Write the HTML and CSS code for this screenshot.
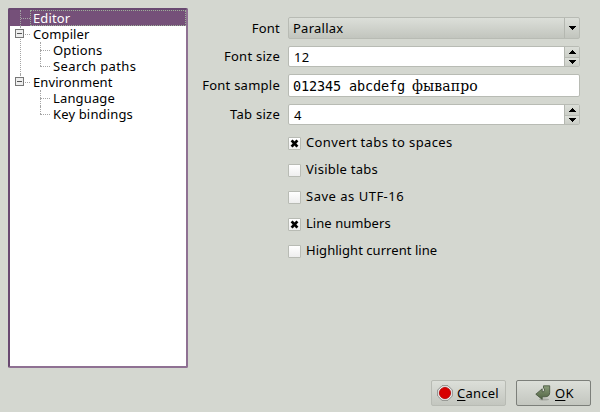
FILE: index.html
```html
<!DOCTYPE html>
<html lang="en">
<head>
<meta charset="utf-8">
<title>Settings</title>
<link rel="stylesheet" href="styles.css">
</head>
<body>
<main class="content">
  <ul class="tree">
    <li class="node leaf"><span class="item selected">Editor</span></li>
    <li class="node"><i class="toggle"></i><span class="item">Compiler</span>
      <ul class="children">
        <li>Options</li>
        <li class="wide">Search paths</li>
      </ul>
    </li>
    <li class="node last"><i class="toggle"></i><span class="item">Environment</span>
      <ul class="children">
        <li>Language</li>
        <li>Key bindings</li>
      </ul>
    </li>
  </ul>
  <section class="form">
    <div class="row"><label>Font</label><div class="combo"><span>Parallax</span><b><svg width="7" height="4" shape-rendering="crispEdges"><path d="M0 0h7v1H6v1H5v1H4v1H3V3H2V2H1V1H0z"/></svg></b></div></div>
    <div class="row size"><label>Font size</label><div class="field spin"><span>12</span><div class="arrows"><b><svg width="7" height="4" shape-rendering="crispEdges"><path d="M3 0h1v1h1v1h1v1h1v1H0V3h1V2h1V1h1z"/></svg></b><b><svg width="7" height="4" shape-rendering="crispEdges"><path d="M0 0h7v1H6v1H5v1H4v1H3V3H2V2H1V1H0z"/></svg></b></div></div></div>
    <div class="row sample"><label>Font sample</label><div class="field"><span class="mono">012345 abcdefg</span><span class="cyr">фывапро</span></div></div>
    <div class="row tabsize"><label>Tab size</label><div class="field spin"><span>4</span><div class="arrows"><b><svg width="7" height="4" shape-rendering="crispEdges"><path d="M3 0h1v1h1v1h1v1h1v1H0V3h1V2h1V1h1z"/></svg></b><b><svg width="7" height="4" shape-rendering="crispEdges"><path d="M0 0h7v1H6v1H5v1H4v1H3V3H2V2H1V1H0z"/></svg></b></div></div></div>
    <div class="checks">
      <div class="check wide"><i><svg width="13" height="13"><path d="M3.6 3.4l5.8 6.2M9.4 3.4L3.6 9.6"/></svg></i><span>Convert tabs to spaces</span></div>
      <div class="check"><i></i><span>Visible tabs</span></div>
      <div class="check wider"><i></i><span>Save as UTF-16</span></div>
      <div class="check tight"><i><svg width="13" height="13"><path d="M3.6 3.4l5.8 6.2M9.4 3.4L3.6 9.6"/></svg></i><span>Line numbers</span></div>
      <div class="check tight"><i></i><span>Highlight current line</span></div>
    </div>
  </section>
</main>
<footer class="actions">
  <div class="button cancel">
    <svg width="16" height="16" viewBox="0 0 16 16"><path d="M5 .7h6L15.3 5v6L11 15.3H5L.7 11V5z" fill="#eee" stroke="#8a8c88"/><circle cx="8" cy="8" r="5.6" fill="#d80000" stroke="#b00000" stroke-width=".8"/></svg>
    <span><u>C</u>ancel</span>
  </div>
  <div class="button ok">
    <svg width="16" height="16" viewBox="0 0 16 16"><defs><linearGradient id="g" x2="0" y2="1"><stop stop-color="#8b9d7b"/><stop offset="1" stop-color="#506342"/></linearGradient></defs><ellipse cx="9" cy="14.5" rx="5" ry="1" fill="#a7aaa3"/><path d="M8.5.8h6.2v6.7q0 4.3-4.7 4.3H7.2v2.6L.8 9.2l6.4-5.4v3h.9q1.4 0 1.4-1.5V3.8l-1-.6z" fill="url(#g)" stroke="#42503a" stroke-width=".8"/></svg>
    <span><u>O</u>K</span>
  </div>
</footer>
</body>
</html>
```

FILE: styles.css
```css
* { box-sizing: border-box; }
body {
  margin: 0;
  width: 600px;
  height: 412px;
  overflow: hidden;
  background: #d4d7d0;
  color: #000;
  font: 13px/16px "Noto Sans", sans-serif;
  letter-spacing: .25px;
  white-space: nowrap;
}
ul { list-style: none; margin: 0; padding: 0; }
i, b { display: block; }
svg { display: block; flex: none; }
.wide { letter-spacing: .38px; }
.wider { letter-spacing: .5px; }
.tight { letter-spacing: .05px; }

.content { display: flex; padding: 8px 20px 0 8px; height: 380px; }
.tree {
  width: 180px;
  height: 360px;
  background: #fff;
  border: 2px solid #8f7193;
  border-color: #684870 #8f7193 #8f7193 #684870;
  border-radius: 2px;
}
.node { position: relative; padding-left: 20px; }
.node::before {
  content: "";
  position: absolute;
  left: 10px;
  top: 0;
  bottom: 0;
  border-left: 1px dotted #a5a5a5;
}
.node.last::before { bottom: auto; height: 8px; }
.node::after {
  content: "";
  position: absolute;
  left: 11px;
  top: 8px;
  width: 9px;
  border-top: 1px dotted #a5a5a5;
}
.leaf { background: #755079; }
.item { display: block; height: 16px; padding-left: 3px; letter-spacing: .1px; }
.selected { color: #fff; outline: 1px dotted #9cb198; outline-offset: -1px; }
.toggle {
  position: absolute;
  z-index: 1;
  left: 5px;
  top: 3px;
  width: 9px;
  height: 9px;
  border: 1px solid #777;
  background: linear-gradient(#555, #555) center / 5px 1px no-repeat #eee;
}
.children { letter-spacing: .15px; }
.children li { position: relative; padding-left: 23px; height: 16px; }
.children li::before {
  content: "";
  position: absolute;
  left: 10px;
  top: 0;
  height: 16px;
  border-left: 1px dotted #a5a5a5;
}
.children li:last-child::before { height: 8px; }
.children li::after {
  content: "";
  position: absolute;
  left: 10px;
  top: 8px;
  width: 10px;
  border-top: 1px dotted #a5a5a5;
}

.form { flex: 1; padding-top: 9px; }
.row { display: grid; grid-template-columns: 92px 292px; column-gap: 8px; height: 22px; margin-bottom: 7px; }
.row label { text-align: right; align-self: center; padding-bottom: 1px; }
.row.sample { height: 23px; margin-bottom: 7px; }
.row.size { height: 21px; }
.row.tabsize { height: 21px; margin-bottom: 10px; }
.combo {
  display: flex;
  justify-content: space-between;
  align-items: center;
  padding-left: 4px;
  border: 1px solid #b8bbb4;
  border-radius: 2px;
  background: linear-gradient(#dcdfd9, #c2c5be);
}
.combo b { width: 15px; height: 20px; display: grid; place-items: center; border-left: 1px solid #b4b7b0; }
.field {
  display: flex;
  align-items: center;
  padding-left: 4px;
  background: #fff;
  border: 1px solid #b8bbb4;
  border-radius: 2px;
}
.spin { justify-content: space-between; padding-left: 5px; }
.arrows { width: 15px; height: 100%; display: grid; grid-template-rows: 10px 9px; border-left: 1px solid #b4b7b0; }
.arrows b { display: grid; place-items: center; background: linear-gradient(#dcdfd9, #cbcec7); }
.arrows b + b { border-top: 1px solid #b8bbb4; }
.mono { font: 13.5px/18px "DejaVu Sans Mono", monospace; letter-spacing: -.13px; }
.cyr { font: 14px/18px "DejaVu Serif", serif; letter-spacing: .1px; margin-left: 7px; }

.checks { display: grid; gap: 11px; padding-left: 100px; }
.check { display: flex; align-items: center; height: 16px; gap: 5px; }
.check span { padding-bottom: 2px; }
.check i { width: 13px; height: 13px; border: 1px solid #b8bbb4; border-radius: 1px; background: linear-gradient(#fff, #eee); }
.check svg { margin: -1px; }
.check path { stroke: #000; stroke-width: 2.8; }

.actions { display: flex; justify-content: flex-end; gap: 10px; padding-right: 9px; }
.button {
  display: flex;
  align-items: center;
  width: 75px;
  height: 26px;
  gap: 4px;
  padding-left: 5px;
  border: 1px solid #b8bbb4;
  border-radius: 2px;
  background: linear-gradient(#dcdfd9, #c3c6bf);
}
.ok { padding-left: 18px; border-color: #7c7f7a; }
u { text-underline-offset: 2px; text-decoration-thickness: 1px; text-decoration-skip-ink: none; }
```
